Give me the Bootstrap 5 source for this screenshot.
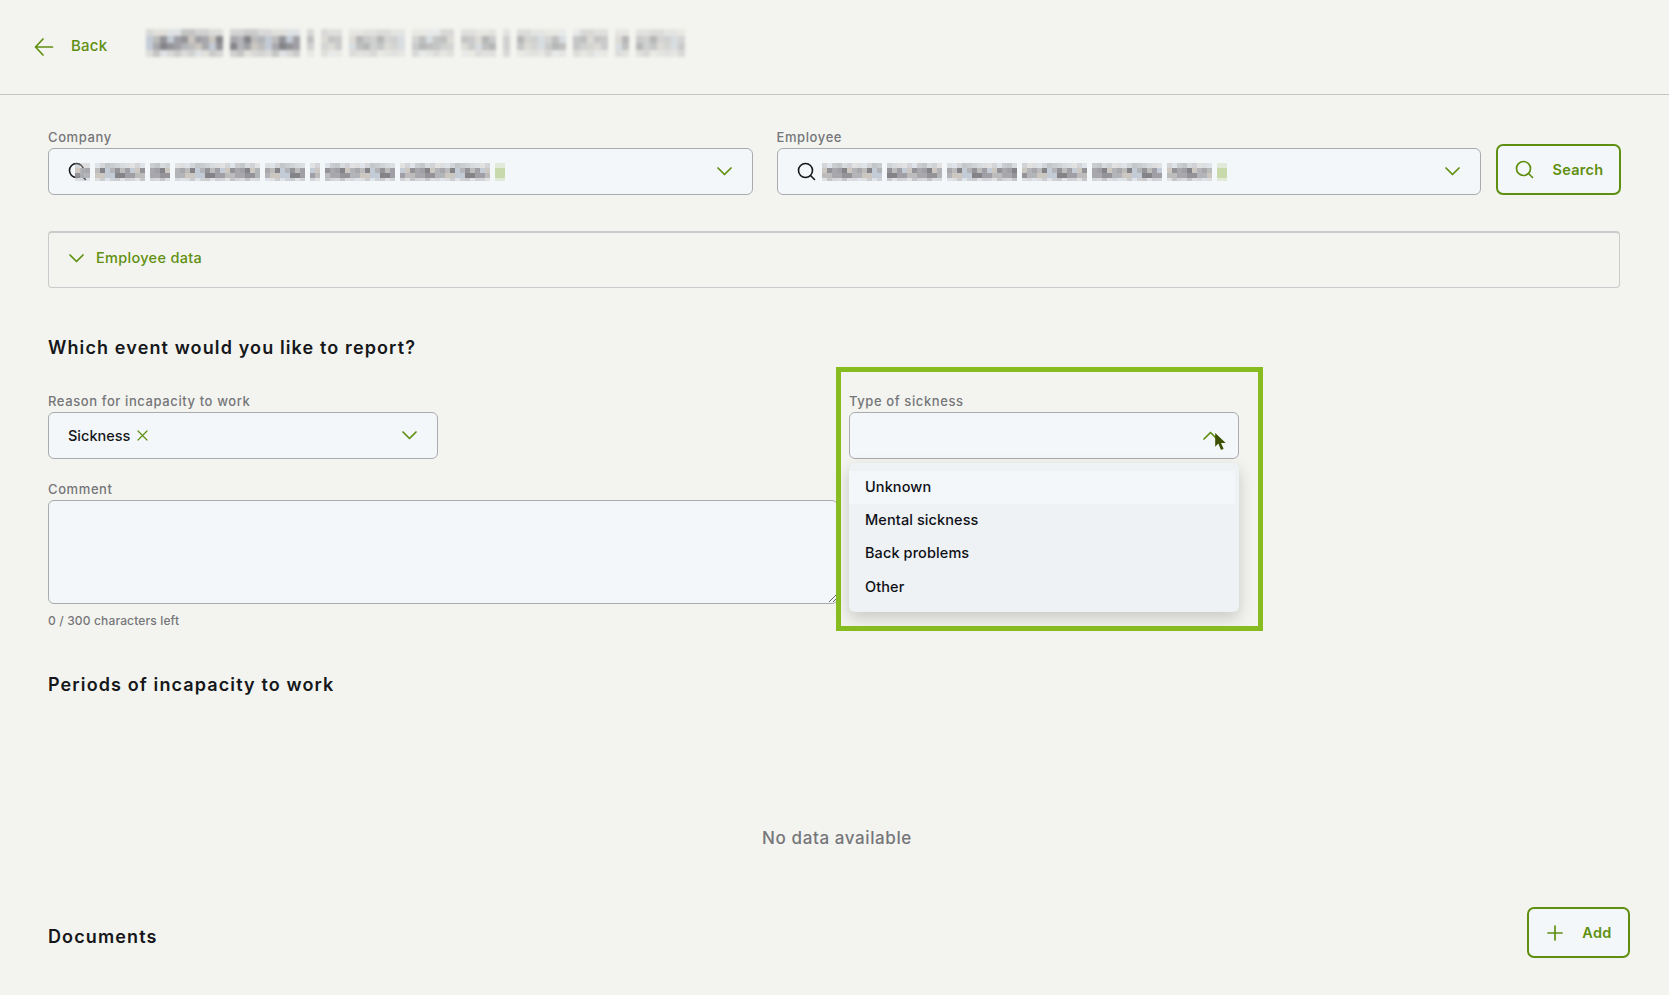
<!DOCTYPE html>
<html lang="en">
<head>
    <meta charset="UTF-8">
    <meta name="viewport" content="width=device-width, initial-scale=1.0">
    <title>Report event</title>
    <link href="https://cdn.jsdelivr.net/npm/bootstrap@5.3.0/dist/css/bootstrap.min.css" rel="stylesheet">
    <style>
        body {
            background-color: #f3f4ef;
            font-family: Inter, "Liberation Sans", sans-serif;
            color: #15171a;
            overflow: hidden;
        }
        .green-text { color: #5f8f10; }
        .page-head {
            height: 95px;
            padding: 0 34px 1px;
            border-bottom: 1px solid #c4c6c8;
        }
        .back-link {
            color: #5f8f10;
            font-size: 15px;
            font-weight: 500;
            letter-spacing: .2px;
            text-decoration: none;
            gap: 17px;
            margin-right: 39px;
        }
        .title-mosaic { display: block; margin-bottom: 7px; filter: blur(1.4px); }
        .page-body { padding: 34px 49px 0 48px; }
        .field-label {
            display: block;
            height: 16px;
            line-height: 16px;
            font-size: 13px;
            font-weight: 500;
            letter-spacing: .6px;
            color: #75767a;
            margin-bottom: 3px;
        }
        .field-box {
            height: 47px;
            padding: 0 20px 0 19px;
            background-color: #f4f7fa;
            border: 1px solid #a9abae;
            border-radius: 6px;
            font-size: 14.5px;
            font-weight: 500;
        }
        .field-half { flex: 1 1 0; min-width: 0; }
        .outline-btn {
            background-color: #f4f7fa;
            border: 2px solid #5f8f10;
            border-radius: 7px;
            color: #5f8f10;
            font-size: 14.5px;
            font-weight: 600;
            letter-spacing: .3px;
            height: 51px;
        }
        .search-btn { width: 125px; gap: 18px; margin-left: 15px; margin-right: -1px; padding-left: 8px; }
        .add-btn { width: 103px; gap: 19px; margin-right: -10px; padding-left: 8px; }
        .value-mosaic { display: block; filter: blur(.5px); }
        .company-mosaic { margin-left: -12px; }
        .employee-mosaic { margin-left: 6px; }
        .clear-x { margin-left: 7px; }
        .data-panel {
            height: 57px;
            margin-top: 36px;
            padding: 0 0 4px 20px;
            gap: 12px;
            border: 1px solid #c8cacb;
            border-top-width: 2px;
            border-radius: 4px;
            font-size: 14.5px;
            font-weight: 500;
            letter-spacing: .3px;
        }
        .section-title {
            font-size: 18px;
            line-height: 24px;
            font-weight: 600;
            letter-spacing: 1.12px;
            margin: 0;
        }
        .event-title { margin-top: 48px; }
        .periods-title { margin-top: 43px; }
        .docs-title { padding-top: 8px; }
        .form-grid {
            display: grid;
            grid-template-columns: repeat(4, 389.5px);
            column-gap: 11px;
            margin-top: 33px;
        }
        .type-field { position: relative; grid-column: 3; }
        .comment-field { grid-column: 1 / span 2; grid-row: 2; margin-top: 22px; }
        .comment-area {
            display: block;
            width: 100%;
            height: 104px;
            background-color: #f4f7fa;
            border: 1px solid #a9abae;
            border-radius: 6px;
        }
        .comment-count {
            font-size: 12px;
            line-height: 18px;
            font-weight: 500;
            letter-spacing: .15px;
            color: #75767a;
            margin-top: 8px;
        }
        .type-menu {
            position: absolute;
            top: 70px;
            left: 0;
            right: 0;
            height: 149px;
            padding-top: 8px;
            background-color: #eff2f5;
            border-radius: 6px;
            box-shadow: 0 6px 16px rgba(0, 0, 0, .18);
            font-size: 14.5px;
            font-weight: 500;
            letter-spacing: .1px;
            z-index: 2;
        }
        .type-item {
            height: 33.3px;
            padding: 0 0 2px 16px;
            display: flex;
            align-items: center;
            color: #0e1016;
        }
        .type-item-active { background-color: #f4f7fa; margin-right: 4px; }
        .note-frame {
            position: absolute;
            left: 836px;
            top: 367px;
            width: 427px;
            height: 264px;
            border: 5px solid #86bc1f;
            pointer-events: none;
            z-index: 3;
        }
        .mouse-cursor {
            position: absolute;
            left: 1214px;
            top: 433px;
            z-index: 4;
        }
        .empty-note {
            font-size: 17px;
            line-height: 22px;
            font-weight: 500;
            letter-spacing: .6px;
            color: #75767a;
            text-align: center;
            margin-top: 130px;
            padding-left: 6px;
        }
        .docs-row { margin-top: 58px; }
    </style>
</head>
<body>
    <header class="page-head d-flex align-items-center">
        <a class="back-link d-inline-flex align-items-center" href="#">
            <svg width="20" height="20" viewBox="0 0 20 20" fill="none" stroke="#5f8f10" stroke-width="1.7" stroke-linecap="round" stroke-linejoin="round"><path d="M18.500 10H1.500M9 2 1.500 10 9 18"/></svg>
            Back
        </a>
        <svg class="title-mosaic" width="546" height="28" data-cell="7" data-words="11,10,1,3,8,6,5,1,7,5,2,7" data-seed="11" data-fade="1"></svg>
    </header>

    <main class="page-body">
        <div class="d-flex align-items-end">
            <div class="field-half">
                <label class="field-label">Company</label>
                <div class="field-box d-flex align-items-center">
                    <svg width="19" height="19" viewBox="0 0 19 19" fill="none" stroke="#15171a" stroke-width="1.6" stroke-linecap="round"><circle cx="8.500" cy="8.500" r="7"/><path d="m13.500 13.500 4 4"/></svg>
                    <svg class="value-mosaic company-mosaic" width="441" height="18" data-cell="5" data-words="3,10,4,17,8,2,14,18,2" data-seed="37" data-tail="1"></svg>
                    <svg class="ms-auto" width="15" height="9" viewBox="0 0 15 9" fill="none" stroke="#5f8f10" stroke-width="1.7" stroke-linecap="round" stroke-linejoin="round"><path d="m1 1 6.500 6.500L14 1"/></svg>
                </div>
            </div>
            <div class="field-half ms-4">
                <label class="field-label">Employee</label>
                <div class="field-box d-flex align-items-center">
                    <svg width="19" height="19" viewBox="0 0 19 19" fill="none" stroke="#15171a" stroke-width="1.6" stroke-linecap="round"><circle cx="8.500" cy="8.500" r="7"/><path d="m13.500 13.500 4 4"/></svg>
                    <svg class="value-mosaic employee-mosaic" width="412" height="18" data-cell="5" data-words="12,11,14,13,14,9,2" data-seed="73" data-tail="1"></svg>
                    <svg class="ms-auto" width="15" height="9" viewBox="0 0 15 9" fill="none" stroke="#5f8f10" stroke-width="1.7" stroke-linecap="round" stroke-linejoin="round"><path d="m1 1 6.500 6.500L14 1"/></svg>
                </div>
            </div>
            <button class="outline-btn search-btn d-flex align-items-center justify-content-center flex-shrink-0" type="button">
                <svg width="19" height="19" viewBox="0 0 19 19" fill="none" stroke="#5f8f10" stroke-width="1.7" stroke-linecap="round"><circle cx="8.500" cy="8.500" r="7"/><path d="m13.500 13.500 4 4"/></svg>
                Search
            </button>
        </div>

        <div class="data-panel green-text d-flex align-items-center">
            <svg width="15" height="9" viewBox="0 0 15 9" fill="none" stroke="#5f8f10" stroke-width="1.7" stroke-linecap="round" stroke-linejoin="round"><path d="m1 1 6.500 6.500L14 1"/></svg>
            Employee data
        </div>

        <h2 class="section-title event-title">Which event would you like to report?</h2>

        <div class="form-grid">
            <div>
                <label class="field-label">Reason for incapacity to work</label>
                <div class="field-box d-flex align-items-center">
                    Sickness
                    <svg class="clear-x" width="11" height="11" viewBox="0 0 11 11" fill="none" stroke="#5f8f10" stroke-width="1.2" stroke-linecap="round"><path d="m1 1 9 9M10 1l-9 9"/></svg>
                    <svg class="ms-auto" width="15" height="9" viewBox="0 0 15 9" fill="none" stroke="#5f8f10" stroke-width="1.7" stroke-linecap="round" stroke-linejoin="round"><path d="m1 1 6.500 6.500L14 1"/></svg>
                </div>
            </div>
            <div class="type-field">
                <label class="field-label">Type of sickness</label>
                <div class="field-box d-flex align-items-center">
                    <svg class="ms-auto" width="15" height="9" viewBox="0 0 15 9" fill="none" stroke="#5f8f10" stroke-width="1.7" stroke-linecap="round" stroke-linejoin="round"><path d="M1 8 7.500 1.500 14 8"/></svg>
                </div>
                <div class="type-menu">
                    <div class="type-item type-item-active">Unknown</div>
                    <div class="type-item">Mental sickness</div>
                    <div class="type-item">Back problems</div>
                    <div class="type-item">Other</div>
                </div>
            </div>
            <div class="comment-field">
                <label class="field-label">Comment</label>
                <textarea class="comment-area"></textarea>
                <div class="comment-count">0 / 300 characters left</div>
            </div>
        </div>

        <h2 class="section-title periods-title">Periods of incapacity to work</h2>
        <div class="empty-note">No data available</div>

        <div class="docs-row d-flex justify-content-between align-items-center">
            <h2 class="section-title docs-title">Documents</h2>
            <button class="outline-btn add-btn d-flex align-items-center justify-content-center" type="button">
                <svg width="16" height="16" viewBox="0 0 16 16" fill="none" stroke="#5f8f10" stroke-width="1.7" stroke-linecap="round"><path d="M8 1v14M1 8h14"/></svg>
                Add
            </button>
        </div>
    </main>

    <div class="note-frame"></div>
    <svg class="mouse-cursor" width="14" height="19" viewBox="0 0 13 18"><path d="M1 0v13l3-3 2.500 6 2.500-1-2.500-5.500H11z" fill="#3d5200"/></svg>

    <script src="https://cdn.jsdelivr.net/npm/bootstrap@5.3.0/dist/js/bootstrap.bundle.min.js"></script>
    <script>
        // Censored values in the reference: fill each strip with grey blocks, word by word
        const shades = ['#8d8d92', '#a3a3a8', '#b9b8b8', '#9a9aa0', '#7d7c82', '#c0c8d4', '#c9c4be', '#aeb0b4'];

        document.querySelectorAll('svg[data-words]').forEach(svg => {
            const cell = Number(svg.dataset.cell);
            const height = Number(svg.getAttribute('height'));
            const words = svg.dataset.words.split(',').map(Number);
            let value = Number(svg.dataset.seed);
            let column = 0;
            let parts = '';
            words.forEach((length, wordIndex) => {
                const isTail = svg.dataset.tail && wordIndex === words.length - 1;
                for (let i = 0; i < length; i++, column++) {
                    for (let y = 0; y < height; y += cell) {
                        value = (value * 9301 + 49297) % 233280;
                        const isEdge = y === 0 || y + cell >= height;
                        let opacity = isEdge ? 0.4 : 0.95;
                        if (svg.dataset.fade && wordIndex > 1) opacity *= 0.55;
                        const fill = isTail ? '#c5d8a8' : shades[(value >> 3) % shades.length];
                        parts += `<rect x="${column * cell}" y="${y}" width="${cell}" height="${cell}" fill="${fill}" opacity="${opacity}"/>`;
                    }
                }
                column++; // gap between words
            });
            svg.innerHTML = parts;
        });
    </script>
</body>
</html>
